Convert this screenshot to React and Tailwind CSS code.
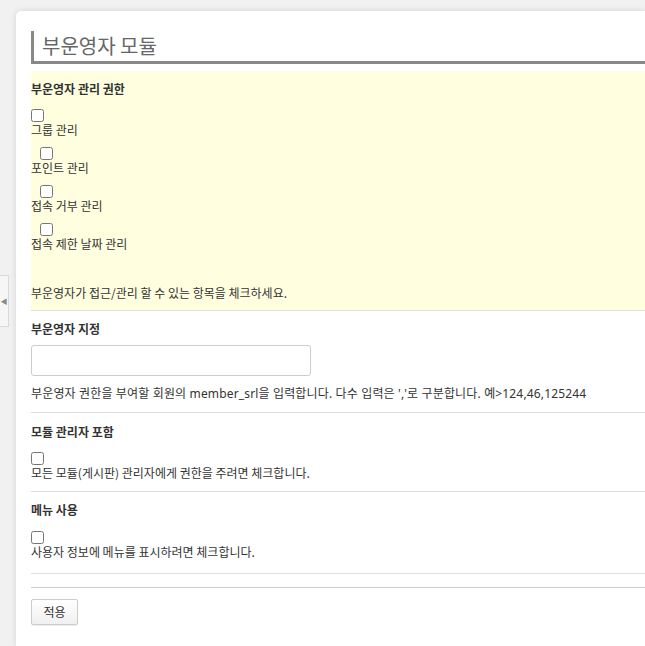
import React from 'react';

const font = { fontFamily: '"Noto Sans CJK KR", "Noto Sans", sans-serif' };
const latinFirst = { fontFamily: '"Noto Sans", "Noto Sans CJK KR", sans-serif' };

const perms = ['그룹 관리', '포인트 관리', '접속 거부 관리', '접속 제한 날짜 관리'];

const App = () => {
  return (
    <div className="relative min-h-screen bg-[#f1f1f1] overflow-hidden text-[#333]" style={font}>
      {/* sidebar toggle tab */}
      <div className="absolute left-0 top-[275px] w-[9px] h-[52px] border border-l-0 border-[#d5d9e0] bg-[#f6f6f6] flex items-center justify-center">
        <span className="text-[7px] text-[#888] leading-none">◀</span>
      </div>

      <div className="ml-[16px] mt-[11px] min-h-[635px] bg-white rounded-tl-[5px] shadow-[0_0_6px_rgba(0,0,0,0.12)] pl-[15px] pt-[20px]">
        <h1 className="h-[33px] border-l-[3px] border-b-[3px] border-[#888] pl-[8px] text-[20px] leading-[30px] text-[#666] font-normal">
          부운영자 모듈
        </h1>

        <div className="mt-[7px] bg-[#ffffe0] pt-[10px] pb-[9px] border-b border-[#ddd]">
          <div className="text-[12px] leading-[16px] font-bold">부운영자 관리 권한</div>
          <div className="mt-[12px]">
            {perms.map((p, i) => (
              <div key={p} className="mb-[9px]">
                <input type="checkbox" className={`block w-[13px] h-[13px] m-0 ${i > 0 ? 'ml-[9px]' : ''}`} />
                <div className="text-[12px] leading-[16px]">{p}</div>
              </div>
            ))}
          </div>
          <p className="mt-[33px] text-[12px] leading-[16px]">부운영자가 접근/관리 할 수 있는 항목을 체크하세요.</p>
        </div>

        <div className="pt-[10px] pb-[10px] border-b border-[#ddd]">
          <div className="text-[12px] leading-[16px] font-bold">부운영자 지정</div>
          <input type="text" className="block mt-[8px] w-[280px] h-[31px] border border-[#ccc] rounded-[3px] bg-white" />
          <p className="mt-[10px] text-[12px] leading-[16px] tracking-[0.15px]" style={latinFirst}>
            부운영자 권한을 부여할 회원의 member_srl을 입력합니다. 다수 입력은 ','로 구분합니다. 예&gt;124,46,125244
          </p>
        </div>

        <div className="pt-[11px] pb-[10px] border-b border-[#ddd]">
          <div className="text-[12px] leading-[16px] font-bold">모듈 관리자 포함</div>
          <input type="checkbox" className="block mt-[12px] w-[13px] h-[13px]" />
          <p className="text-[12px] leading-[16px]">모든 모듈(게시판) 관리자에게 권한을 주려면 체크합니다.</p>
        </div>

        <div className="pt-[10px] pb-[13px] border-b border-[#ddd]">
          <div className="text-[12px] leading-[16px] font-bold">메뉴 사용</div>
          <input type="checkbox" className="block mt-[13px] w-[13px] h-[13px]" />
          <p className="text-[12px] leading-[16px]">사용자 정보에 메뉴를 표시하려면 체크합니다.</p>
        </div>

        <div className="mt-[13px] border-t border-[#ccc] pt-[10px]">
          <button className="w-[47px] h-[26px] border border-[#ccc] rounded-[2px] bg-gradient-to-b from-white to-[#f0f0f0] text-[12px] text-[#333] shadow-[0_1px_1px_rgba(0,0,0,0.08)]">
            적용
          </button>
        </div>
      </div>
    </div>
  );
};

export default App;
